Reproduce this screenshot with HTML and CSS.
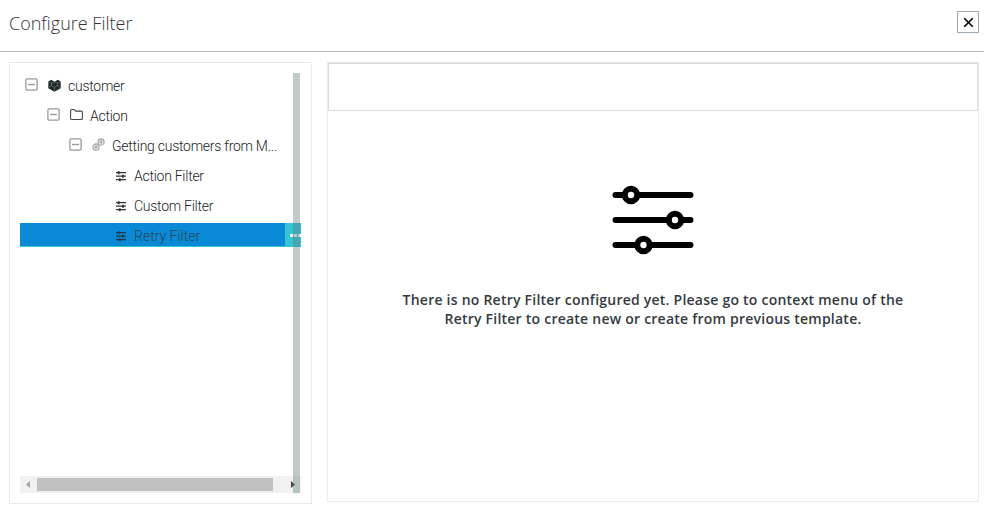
FILE: index.html
```
<!DOCTYPE html>
<html lang="en">
<head>
<meta charset="utf-8">
<title>Configure Filter</title>
<link rel="stylesheet" href="styles.css">
</head>
<body>
<svg class="defs" aria-hidden="true">
  <symbol id="minus" viewBox="0 0 13 13"><rect x=".9" y=".9" width="11.2" height="11.2" rx="1.2" fill="#fff" stroke="#999" stroke-width="1.3"/><path d="M3 6.5h7" stroke="#999" stroke-width="1.4"/></symbol>
  <symbol id="sliders" viewBox="0 0 12 12"><path d="M1 2.7h10M1 6.2h10M1 9.7h10" stroke="currentColor" stroke-width="1.3"/><path d="M3.7 1.2v3M8 4.7v3M4.8 8.2v3" stroke="currentColor" stroke-width="1.8"/></symbol>
</svg>
<header class="header">
  <h1 class="title">Configure Filter</h1>
  <button class="close" aria-label="Close"><svg width="20" height="20" viewBox="0 0 20 20"><path d="M6.2 6.2l8.6 8.6M14.8 6.2l-8.6 8.6" stroke="#000" stroke-width="1.6"/></svg></button>
</header>
<main class="content">
  <aside class="tree-panel">
    <ul class="tree">
      <li class="row">
        <svg class="toggle"><use href="#minus"/></svg>
        <svg class="icon" viewBox="0 0 13 13"><path d="M.3 2.6L3.2.8l3.3 2 3.3-2 2.9 1.8v6.6L6.5 12.8.3 9.2z" fill="#20292c"/><path d="M1 3l2.5 1.2L6.5 2.8l3 1.4L12 3M3.5 4.2v2.3l3 1.8 3-1.8V4.2M6.5 8.3v3.5M3.5 6.5L1.5 8M9.5 6.5l2 1.5" fill="none" stroke="#8d9698" stroke-width=".5"/></svg>
        <span class="label">customer</span>
      </li>
      <li class="row level-1">
        <svg class="toggle"><use href="#minus"/></svg>
        <svg class="icon raised" viewBox="0 0 13 13"><path d="M.6 10.5v-8q0-1 1-1h2.6l1.5 1.6h5.7q1 0 1 1v6.4q0 1-1 1H1.6q-1 0-1-1z" fill="none" stroke="#444" stroke-width="1.05"/></svg>
        <span class="label">Action</span>
      </li>
      <li class="row level-2">
        <svg class="toggle"><use href="#minus"/></svg>
        <svg class="icon raised" viewBox="0 0 13 13"><g fill="none" stroke="#999" stroke-width="1.1"><circle cx="4" cy="9" r="3.1"/><circle cx="4" cy="9" r="1.1"/><circle cx="9" cy="4" r="3.1"/><circle cx="9" cy="4" r="1.1"/></g></svg>
        <span class="label">Getting customers from M...</span>
      </li>
      <li class="row level-3"><svg class="leaf"><use href="#sliders"/></svg><span class="label">Action Filter</span></li>
      <li class="row level-3"><svg class="leaf"><use href="#sliders"/></svg><span class="label">Custom Filter</span></li>
      <li class="row level-3 selected"><svg class="leaf"><use href="#sliders"/></svg><span class="label">Retry Filter</span><span class="more"><i></i><i></i><i></i></span></li>
    </ul>
    <div class="hscroll">
      <svg class="arrow" viewBox="0 0 17 17"><path d="M10 5v7L6 8.5z" fill="#a3a3a3"/></svg>
      <div class="thumb"></div>
      <svg class="arrow right" viewBox="0 0 17 17"><path d="M7 5v7l4-3.5z" fill="#444"/></svg>
    </div>
    <div class="vscroll"></div>
  </aside>
  <section class="detail">
    <div class="toolbar"></div>
    <div class="empty">
      <svg class="hero" width="82" height="70" viewBox="0 0 82 70"><path d="M3.5 10h75M3.5 35h75M3.5 60h75" stroke="#000" stroke-width="6" stroke-linecap="round"/><g fill="#fff" stroke="#000" stroke-width="6"><circle cx="19" cy="10" r="6.2"/><circle cx="63" cy="35" r="6.2"/><circle cx="31.5" cy="60" r="6.2"/></g></svg>
      <p class="message">There is no Retry Filter configured yet. Please go to context menu of the<br>Retry Filter to create new or create from previous template.</p>
    </div>
  </section>
</main>
</body>
</html>
```
FILE: styles.css
```
* { box-sizing: border-box; }
body { margin: 0; height: 513px; overflow: hidden; background: #fff; font-family: "Open Sans", sans-serif; }
.defs { display: none; }
svg { display: block; flex: none; }
.header { display: flex; justify-content: space-between; height: 52px; padding: 11px 5px 0 9px; border-bottom: 1px solid #bbb; }
.title { margin: 0; font-size: 18px; line-height: 25px; font-weight: 300; color: #333; }
.close { width: 22px; height: 22px; padding: 0; border: 1px solid #9eabb3; background: #fff; }
.content { display: flex; align-items: flex-start; gap: 15px; padding: 10px 5px 0 9px; }
.tree-panel { position: relative; display: flex; flex-direction: column; width: 303px; height: 442px; padding: 10px; border: 1px solid #e8eaeb; border-top-color: #e2e9ec; }
.tree { flex: 1; display: flex; flex-direction: column; gap: 6px; margin: 0; padding: 0; list-style: none; }
.row { display: flex; align-items: center; height: 24px; padding-left: 5px; }
.level-1 { padding-left: 27px; }
.level-2 { padding-left: 49px; }
.level-3 { padding-left: 95px; }
.toggle { width: 13px; height: 13px; margin: 0 10px 1px 0; }
.icon { width: 13px; height: 13px; margin: 1px 7px 0 0; }
.raised { margin-top: 0; margin-bottom: 1px; }
.leaf { width: 12px; height: 12px; margin: 2px 7px 0 0; color: #333; }
.label { padding-top: 2px; font: 300 14px/24px Roboto, sans-serif; letter-spacing: -.26px; white-space: nowrap; color: #222; }
.selected { background: #0a8ad6; border-bottom: 1px solid #35c4d4; }
.selected .leaf { margin-top: 3px; color: #20384a; }
.selected .label { padding-top: 3px; letter-spacing: 0; color: #24445a; }
.more { display: flex; align-items: center; justify-content: flex-end; gap: 1px; width: 16px; height: 24px; margin: 0 0 -1px auto; background: #35c4d4; }
.more i { width: 3px; height: 3px; background: #fff; }
.hscroll { display: flex; align-items: center; width: 281px; height: 17px; background: #f1f1f1; }
.arrow { width: 17px; height: 17px; }
.right { margin-left: auto; }
.thumb { width: 236px; height: 13px; background: #c1c1c1; }
.vscroll { position: absolute; top: 10px; right: 11px; width: 7px; height: 420px; background: rgba(95, 119, 122, .39); }
.detail { flex: 1; height: 440px; border: 1px solid #e8eaeb; border-top-color: #e2e9ec; }
.toolbar { height: 48px; border: 1px solid #d8dadc; }
.empty { display: flex; flex-direction: column; align-items: center; padding-top: 74px; }
.message { margin: 35px 0 0; font-size: 14px; line-height: 19px; font-weight: 600; letter-spacing: .235px; text-align: center; color: #343a40; white-space: nowrap; }
```
